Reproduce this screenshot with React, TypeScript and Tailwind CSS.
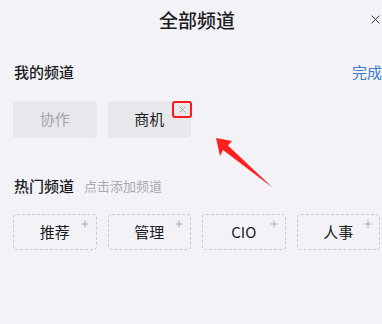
import React from 'react'

const font = { fontFamily: '"Noto Sans CJK SC", "Noto Sans", sans-serif' }

const mine = [
  { label: '协作', fixed: true },
  { label: '商机', fixed: false },
]

const hot = ['推荐', '管理', 'CIO', '人事']

function Cross({ className }: { className?: string }) {
  return (
    <svg viewBox="0 0 10 10" className={className} fill="none" stroke="currentColor" strokeWidth="1.1" strokeLinecap="round">
      <path d="M1 1l8 8M9 1l-8 8" />
    </svg>
  )
}

function Plus({ className }: { className?: string }) {
  return (
    <svg viewBox="0 0 10 10" className={className} fill="none" stroke="currentColor" strokeWidth="1">
      <path d="M5 0.5v9M0.5 5h9" />
    </svg>
  )
}

export default function App() {
  return (
    <div className="relative w-[382px] h-[324px] overflow-hidden bg-[#f2f2f7] text-[#1c1c1e]" style={font}>
      <div className="relative h-[40px] flex items-center justify-center pl-[12px]">
        <span className="text-[19px] font-medium">全部频道</span>
        <Cross className="absolute right-[2px] top-[15px] w-[9px] h-[9px] text-[#333]" />
      </div>

      <div className="mt-[21px] h-[22px] flex items-center justify-between pl-[14px]">
        <span className="text-[15px] font-medium">我的频道</span>
        <span className="text-[15px] text-[#3b7cc9]">完成</span>
      </div>

      <div className="mt-[18px] grid grid-cols-4 gap-[11px] pl-[13px] pr-[2px]">
        {mine.map(m => (
          <div
            key={m.label}
            className="relative h-[37px] rounded-[4px] bg-[#e8e8ec] flex items-center justify-center text-[15px]"
          >
            <span className={m.fixed ? 'text-[#a3a3a8]' : 'text-[#1c1c1e]'}>{m.label}</span>
            {!m.fixed && (
              <div className="absolute -right-[1px] top-0 w-[20px] h-[17px] border-2 border-[#ff1a1a] rounded-[3px] flex items-center justify-center">
                <Cross className="w-[7px] h-[7px] text-[#9a9a9a]" />
              </div>
            )}
          </div>
        ))}
      </div>

      <div className="mt-[37px] h-[22px] flex items-center gap-[10px] pl-[14px]">
        <span className="text-[15px] font-medium">热门频道</span>
        <span className="text-[13px] text-[#aaaaae]">点击添加频道</span>
      </div>

      <div className="mt-[17px] grid grid-cols-4 gap-[11px] pl-[13px] pr-[2px]">
        {hot.map(h => (
          <div
            key={h}
            className="relative h-[36px] rounded-[4px] border border-dashed border-[#cacace] flex items-center justify-center text-[15px]"
          >
            {h}
            <Plus className="absolute right-[7px] top-[5px] w-[8px] h-[8px] text-[#9c9c9c]" />
          </div>
        ))}
      </div>

      <svg className="absolute left-0 top-0 pointer-events-none" width="382" height="324" viewBox="0 0 382 324">
        <polygon points="216,138 232,141 228,145.5 273,188 223,150 220,156" fill="#ff1f1f" />
      </svg>
    </div>
  )
}
